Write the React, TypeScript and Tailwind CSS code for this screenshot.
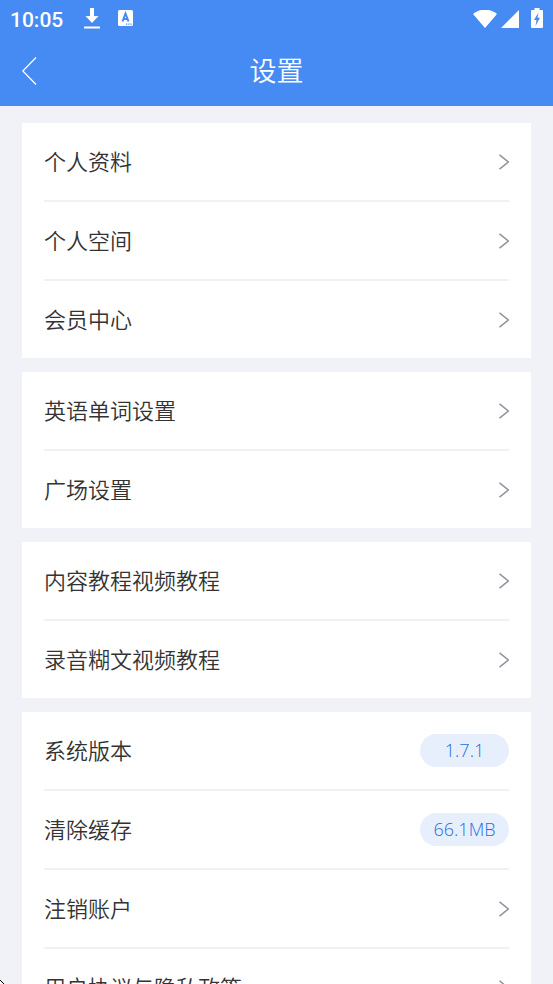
type Item = {
  label: string;
  badge?: string;
};

const groups: Item[][] = [
  [{ label: "个人资料" }, { label: "个人空间" }, { label: "会员中心" }],
  [{ label: "英语单词设置" }, { label: "广场设置" }],
  [{ label: "内容教程视频教程" }, { label: "录音糊文视频教程" }],
  [
    { label: "系统版本", badge: "1.7.1" },
    { label: "清除缓存", badge: "66.1MB" },
    { label: "注销账户" },
    { label: "用户协议与隐私政策" },
  ],
];

function StatusBar() {
  return (
    <div className="flex h-9 items-center justify-between px-[10px]">
      <div className="flex items-center">
        <span className="pt-1 font-['Roboto',sans-serif] text-[21px] font-medium leading-8">10:05</span>
        {/* Download */}
        <svg className="ml-[21px] h-[21px] w-4" viewBox="0 0 16 21" fill="currentColor">
          <path d="M6 0h4v8h4.500L8 15 1.500 8H6zM0 18.500h16v2H0z" />
        </svg>
        {/* Input method */}
        <svg className="ml-[18px] h-4 w-[15px]" viewBox="0 0 15 16">
          <rect width="15" height="16" rx="1.500" fill="currentColor" />
          <path d="M4.500 11.500 7.500 3.500l3 8M5.500 9h4" fill="none" stroke="#468bf4" strokeWidth="2" />
          <path d="M8 13.500h1.200v1.200H8zM10.200 13.500h1.200v1.200h-1.200zM12.400 13.500h1.200v1.200h-1.200z" fill="#468bf4" />
        </svg>
      </div>
      <div className="flex items-end">
        {/* Wifi */}
        <svg className="h-[18px] w-6" viewBox="0 0 24 18" fill="currentColor">
          <path d="M0 4C7-1.800 17-1.800 24 4L12 18z" />
        </svg>
        {/* Signal */}
        <svg className="ml-1 h-[18px] w-[18px]" viewBox="0 0 18 18" fill="currentColor">
          <path d="M18 0v18H0z" />
        </svg>
        {/* Battery */}
        <svg className="ml-3 h-5 w-3" viewBox="0 0 12 20">
          <path d="M3.500 0h5v2H11a1 1 0 0 1 1 1v16a1 1 0 0 1-1 1H1a1 1 0 0 1-1-1V3a1 1 0 0 1 1-1h2.500z" fill="currentColor" />
          <path d="M7.500 4.500 3 12h2.500l-1 6L9 9.800H6.500z" fill="#468bf4" />
        </svg>
      </div>
    </div>
  );
}

function Chevron() {
  return (
    <svg className="h-4 w-[10px]" viewBox="0 0 10 16" fill="none" stroke="#92939f" strokeWidth="1.500">
      <path d="M.500 .800 9.300 8 .500 15.200" />
    </svg>
  );
}

function Row({ label, badge }: Item) {
  return (
    <li>
      <button type="button" className="flex h-[77px] w-full items-center justify-between text-left">
        <span className="pb-1 text-[22px] leading-8">{label}</span>
        {badge ? (
          <span className="flex h-[33px] w-[89px] items-center justify-center rounded-full bg-[#e7effd] font-['Open_Sans',sans-serif] text-[18px] text-[#2470df]">
            {badge}
          </span>
        ) : (
          <Chevron />
        )}
      </button>
    </li>
  );
}

export default function App() {
  return (
    <div className="relative flex h-screen flex-col overflow-hidden bg-[#f1f2f7] font-['Noto_Sans_CJK_SC',sans-serif] font-[350] text-[#333333]">
      <header className="shrink-0 bg-[#468bf4] text-white">
        <StatusBar />
        <div className="grid h-[70px] grid-cols-[1fr_auto_1fr] items-center px-[22px]">
          <button type="button" aria-label="返回" className="justify-self-start">
            <svg className="h-7 w-[15px]" viewBox="0 0 15 28" fill="none" stroke="currentColor" strokeWidth="1.300">
              <path d="M14 .500.800 14 14 27.500" />
            </svg>
          </button>
          <h1 className="pb-0.5 text-[27px] font-[350] leading-10">设置</h1>
        </div>
      </header>

      <main className="flex flex-1 flex-col gap-[14px] overflow-y-auto px-[22px] py-[17px] [scrollbar-width:none]">
        {groups.map((items) => (
          <ul key={items[0].label} className="divide-y-2 divide-[#f1f1f1] bg-white px-[22px]">
            {items.map((item) => (
              <Row key={item.label} {...item} />
            ))}
          </ul>
        ))}
      </main>

      {/* Pointer tip */}
      <svg className="absolute bottom-0 left-0 h-1 w-1" viewBox="0 0 4 4" shapeRendering="crispEdges">
        <path d="M0 0h1v1H0zM1 1h1v1H1zM2 2h1v1H2zM3 3h1v1H3z" fill="#000" />
        <path d="M0 1h1v1h1v1h1v1H0z" fill="#fff" />
      </svg>
    </div>
  );
}
